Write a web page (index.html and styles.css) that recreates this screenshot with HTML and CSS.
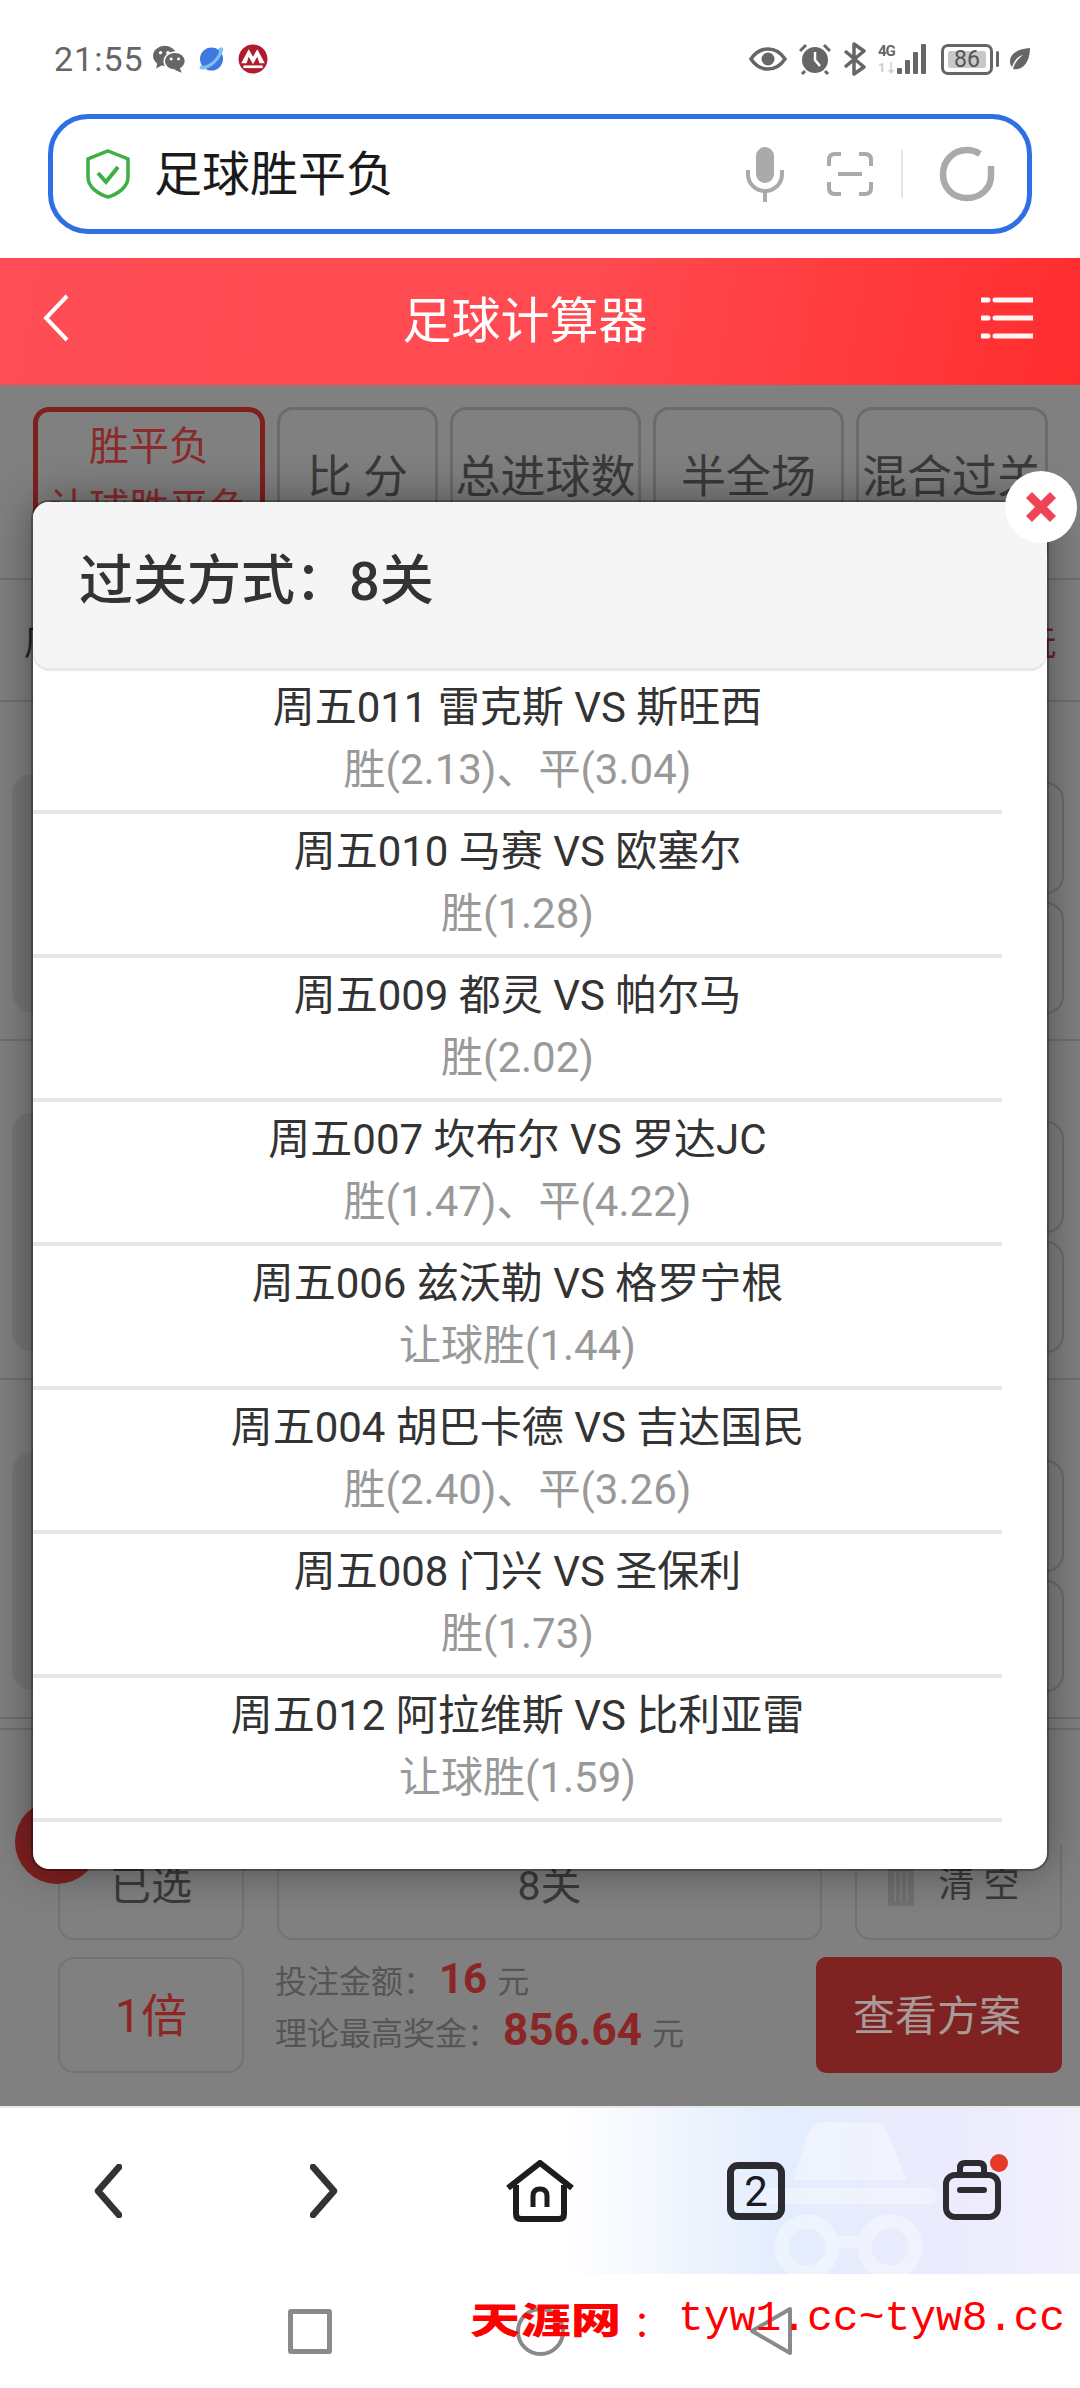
FILE: index.html
```
<!DOCTYPE html>
<html>
<head>
    <meta charset="utf-8">
    <title>足球计算器</title>
    <link rel="stylesheet" href="styles.css">
</head>
<body>
    <div class="phone">
        <!-- Status bar -->
        <div class="status">
            <div class="status-left">
                <span class="time">21:55</span>
                <svg class="ic-wechat" width="34" height="28" viewBox="0 0 32 26">
                    <ellipse cx="12" cy="10" rx="11" ry="9.5" fill="#666"/>
                    <path d="M5 16 L4 22 L11 18 Z" fill="#666"/>
                    <ellipse cx="21.5" cy="15" rx="10" ry="8.5" fill="#666" stroke="#fff" stroke-width="1.5"/>
                    <path d="M26 21 L28 26 L21 23 Z" fill="#666"/>
                    <circle cx="8" cy="7" r="1.6" fill="#fff"/>
                    <circle cx="15" cy="7" r="1.6" fill="#fff"/>
                    <circle cx="18" cy="13" r="1.4" fill="#fff"/>
                    <circle cx="25" cy="13" r="1.4" fill="#fff"/>
                </svg>
                <svg class="ic-planet" width="26" height="26" viewBox="0 0 26 26">
                    <circle cx="12.5" cy="13" r="11.5" fill="#4178e0"/>
                    <path d="M1 23 C6 25 14 20 19 14 C23 9 25 4 24 2 C22 1 20 2 19 3 C22 5 18 11 14 15 C9 19 4 21 2 19 C1 20 0 22 1 23 Z" fill="#7cc2f5"/>
                </svg>
                <svg class="ic-bank" width="30" height="30" viewBox="0 0 28 28">
                    <circle cx="14" cy="14" r="13.5" fill="#b01c2e"/>
                    <path d="M3 18 L10 5 L14 12 L18 5 L25 18 H20 L18 12 L14 19 L10 12 L8 18 Z" fill="#fff"/>
                    <rect x="5" y="20" width="18" height="2.5" fill="#fff"/>
                </svg>
            </div>
            <div class="status-right">
                <svg width="38" height="24" viewBox="0 0 38 24">
                    <path d="M2 12 C8 3 14 2 19 2 C24 2 30 3 36 12 C30 21 24 22 19 22 C14 22 8 21 2 12 Z" fill="none" stroke="#666" stroke-width="3.5"/>
                    <circle cx="19" cy="12" r="6.5" fill="#666"/>
                </svg>
                <svg width="32" height="32" viewBox="0 0 32 32">
                    <circle cx="16" cy="17" r="13" fill="#666"/>
                    <path d="M16 9 V17 L21 23" fill="none" stroke="#fff" stroke-width="2.5"/>
                    <path d="M1 8 L7 2 M31 8 L25 2 M6 28 L3 31 M26 28 L29 31" stroke="#666" stroke-width="3"/>
                </svg>
                <svg width="24" height="34" viewBox="0 0 24 34">
                    <path d="M2 9 L21 25 L11 32 V2 L21 9 L2 25" fill="none" stroke="#666" stroke-width="3.5" stroke-linejoin="round"/>
                </svg>
                <div class="signal">
                    <div class="net">
                        <span class="net-4g">4G</span>
                        <span class="net-arrows">1↓</span>
                    </div>
                    <div class="bars">
                        <i class="bar bar1"></i>
                        <i class="bar bar2"></i>
                        <i class="bar bar3"></i>
                        <i class="bar bar4"></i>
                    </div>
                </div>
                <div class="battery">
                    <div class="battery-body"><span class="battery-level">86</span></div>
                    <i class="battery-nub"></i>
                </div>
                <svg class="ic-leaf" width="23" height="24" viewBox="0 0 23 24">
                    <path d="M22 1 C10 2 2 6 2 15 C2 17 3 19 4 20 C7 12 11 9 15 8 C11 11 7 15 5 22 C14 24 22 16 22 1 Z" fill="#666"/>
                </svg>
            </div>
        </div>

        <!-- Address bar -->
        <div class="addr-wrap">
            <div class="addr">
                <svg width="44" height="50" viewBox="0 0 44 50">
                    <path d="M22 2 L42 10 V28 C42 38 32 45 22 48 C12 45 2 38 2 28 V10 Z" fill="none" stroke="#3cb043" stroke-width="3.5"/>
                    <path d="M12 24 L20 33 L32 18" fill="none" stroke="#3cb043" stroke-width="4"/>
                </svg>
                <span class="addr-text">足球胜平负</span>
                <svg class="ic-mic" width="38" height="56" viewBox="0 0 38 56">
                    <rect x="10" y="1" width="18" height="36" rx="9" fill="#aaa"/>
                    <path d="M2 24 V28 C2 38 10 45 19 45 C28 45 36 38 36 28 V24 M19 45 V56" fill="none" stroke="#aaa" stroke-width="4"/>
                </svg>
                <svg class="ic-scan" width="46" height="44" viewBox="0 0 46 44">
                    <path d="M14 2 H8 Q2 2 2 8 V14 M32 2 H38 Q44 2 44 8 V14 M14 42 H8 Q2 42 2 36 V30 M32 42 H38 Q44 42 44 36 V30" fill="none" stroke="#aaa" stroke-width="4"/>
                    <path d="M11 22 H35" stroke="#aaa" stroke-width="4"/>
                </svg>
                <i class="addr-sep"></i>
                <svg class="ic-reload" width="56" height="56" viewBox="0 0 56 56">
                    <path d="M41 8 C35 4 31 4 28 4 C14 4 4 15 4 28 C4 42 14 52 28 52 C42 52 52 42 52 30 V20" fill="none" stroke="#aaa" stroke-width="6.5"/>
                </svg>
            </div>
        </div>

        <!-- Red title bar -->
        <div class="header">
            <svg width="26" height="48" viewBox="0 0 26 48">
                <path d="M24 2 L3 24 L24 46" fill="none" stroke="#fff" stroke-width="4"/>
            </svg>
            <span class="header-title">足球计算器</span>
            <svg width="52" height="42" viewBox="0 0 52 42">
                <path d="M14 3 H52 M14 21 H52 M14 39 H52" stroke="#fff" stroke-width="5" stroke-linecap="round" opacity=".95"/>
                <path d="M1 3 H7 M1 21 H7 M1 39 H7" stroke="#fff" stroke-width="5" stroke-linecap="round"/>
            </svg>
        </div>

        <!-- Page content, dimmed behind the dialog -->
        <div class="page">
            <div class="tabs">
                <div class="tab tab-active">胜平负<br>让球胜平负</div>
                <div class="tab">比 分</div>
                <div class="tab">总进球数</div>
                <div class="tab">半全场</div>
                <div class="tab">混合过关</div>
            </div>
            <div class="info-row">
                <span>周</span>
                <span class="info-red">玩</span>
            </div>

            <div class="match">
                <div class="match-side"></div>
                <div class="match-odds">
                    <div class="odds-card"></div>
                    <div class="odds-card"></div>
                </div>
            </div>
            <div class="match">
                <div class="match-side"></div>
                <div class="match-odds">
                    <div class="odds-card"></div>
                    <div class="odds-card"></div>
                </div>
            </div>
            <div class="match">
                <div class="match-side"></div>
                <div class="match-odds">
                    <div class="odds-card"></div>
                    <div class="odds-card"></div>
                </div>
            </div>

            <div class="footer">
                <div class="footer-row row-top">
                    <div class="box box-small">已选</div>
                    <div class="box box-wide">8关</div>
                    <div class="box box-clear">
                        <svg width="26" height="38" viewBox="0 0 26 38">
                            <rect width="26" height="38" fill="#707070"/>
                            <path d="M7 4 V34 M13 4 V34 M19 4 V34" stroke="#7c7c7c" stroke-width="2"/>
                        </svg>
                        <span>清 空</span>
                    </div>
                </div>
                <div class="footer-row">
                    <div class="box box-small box-times">1倍</div>
                    <div class="sums">
                        <div class="sum-line">投注金额：<b class="sum-num">16</b> 元</div>
                        <div class="sum-line">理论最高奖金：<b class="sum-num sum-big">856.64</b> 元</div>
                    </div>
                    <div class="view-btn">查看方案</div>
                </div>
            </div>
            <div class="float-ball"></div>
        </div>

        <!-- Browser toolbar -->
        <div class="toolbar">
            <svg class="incognito" width="180" height="160" viewBox="0 0 180 160">
                <path d="M33 60 L48 14 Q52 2 64 2 H114 Q124 2 128 14 L147 60 Z" fill="#fff" fill-opacity=".38"/>
                <rect x="0" y="68" width="177" height="16" rx="8" fill="#fff" fill-opacity=".38"/>
                <circle cx="47" cy="127" r="25.5" fill="none" stroke="#fff" stroke-opacity=".38" stroke-width="14"/>
                <circle cx="130" cy="127" r="25.5" fill="none" stroke="#fff" stroke-opacity=".38" stroke-width="14"/>
                <path d="M79 122 H98" stroke="#fff" stroke-opacity=".38" stroke-width="12"/>
            </svg>
            <div class="tool">
                <svg width="28" height="54" viewBox="0 0 28 54">
                    <path d="M25 3 L4 27 L25 51" fill="none" stroke="#333336" stroke-width="6.5" stroke-linecap="round" stroke-linejoin="round"/>
                </svg>
            </div>
            <div class="tool">
                <svg width="28" height="54" viewBox="0 0 28 54">
                    <path d="M3 3 L24 27 L3 51" fill="none" stroke="#333336" stroke-width="6.5" stroke-linecap="round" stroke-linejoin="round"/>
                </svg>
            </div>
            <div class="tool">
                <svg width="70" height="62" viewBox="0 0 70 62">
                    <path d="M3 28 L35 3 L67 28" fill="none" stroke="#1d1d20" stroke-width="6" stroke-linejoin="miter"/>
                    <path d="M11 25 V54 Q11 59 16 59 H54 Q59 59 59 54 V25" fill="none" stroke="#1d1d20" stroke-width="6"/>
                    <path d="M28 47 V36 Q28 29 35 29 Q42 29 42 36 V47" fill="none" stroke="#1d1d20" stroke-width="5"/>
                </svg>
            </div>
            <div class="tool">
                <div class="tabs-count">2</div>
            </div>
            <div class="tool">
                <svg class="ic-bag" width="66" height="66" viewBox="0 0 66 66">
                    <rect x="7" y="17" width="52" height="42" rx="9" fill="none" stroke="#2b2b30" stroke-width="6"/>
                    <path d="M21 17 V10 Q21 5 26 5 H40 Q45 5 45 10 V17" fill="none" stroke="#2b2b30" stroke-width="6"/>
                    <path d="M21 32 H45" stroke="#2b2b30" stroke-width="6" stroke-linecap="round"/>
                    <circle cx="60" cy="5" r="9" fill="#e53b26"/>
                </svg>
            </div>
        </div>

        <!-- System navigation -->
        <div class="nav">
            <i class="nav-square"></i>
            <i class="nav-circle"></i>
            <svg width="44" height="50" viewBox="0 0 44 50">
                <path d="M41 3 V47 L3 25 Z" fill="none" stroke="#8a8a8a" stroke-width="4" stroke-linejoin="round"/>
            </svg>
        </div>

        <!-- Dialog -->
        <div class="dialog">
            <div class="dialog-head">过关方式：8关</div>
            <ul class="picks">
                <li><p class="pick-name">周五011 雷克斯 VS 斯旺西</p><p class="pick-odds">胜(2.13)、平(3.04)</p></li>
                <li><p class="pick-name">周五010 马赛 VS 欧塞尔</p><p class="pick-odds">胜(1.28)</p></li>
                <li><p class="pick-name">周五009 都灵 VS 帕尔马</p><p class="pick-odds">胜(2.02)</p></li>
                <li><p class="pick-name">周五007 坎布尔 VS 罗达JC</p><p class="pick-odds">胜(1.47)、平(4.22)</p></li>
                <li><p class="pick-name">周五006 兹沃勒 VS 格罗宁根</p><p class="pick-odds">让球胜(1.44)</p></li>
                <li><p class="pick-name">周五004 胡巴卡德 VS 吉达国民</p><p class="pick-odds">胜(2.40)、平(3.26)</p></li>
                <li><p class="pick-name">周五008 门兴 VS 圣保利</p><p class="pick-odds">胜(1.73)</p></li>
                <li><p class="pick-name">周五012 阿拉维斯 VS 比利亚雷</p><p class="pick-odds">让球胜(1.59)</p></li>
            </ul>
        </div>
        <div class="dialog-close">
            <svg width="34" height="32" viewBox="0 0 34 32">
                <path d="M5 4 L29 28 M29 4 L5 28" stroke="#ee4455" stroke-width="8.5"/>
            </svg>
        </div>

        <div class="stamp">
            <span class="stamp-name">天涯网</span>
            <span class="stamp-colon">：</span>
            <span class="stamp-url">tyw1.cc~tyw8.cc</span>
        </div>
    </div>
</body>
</html>
```

FILE: styles.css
```
* {
    box-sizing: border-box;
}

body {
    margin: 0;
    background-color: #fff;
    font-family: Roboto, "Noto Sans CJK SC", sans-serif;
}

.phone {
    position: relative;
    width: 1080px;
    height: 2388px;
    overflow: hidden;
}

/* Status bar */
.status {
    display: flex;
    align-items: center;
    justify-content: space-between;
    height: 114px;
    padding: 4px 49px 0 54px;
}

.status-left,
.status-right {
    display: flex;
    align-items: center;
}

.time {
    font-size: 34px;
    letter-spacing: 1px;
    color: #666;
}

.ic-wechat {
    margin-left: 8px;
}

.ic-planet {
    margin-left: 13px;
}

.ic-bank {
    margin-left: 13px;
}

.status-right {
    gap: 12px;
}

.signal {
    display: flex;
    align-items: flex-end;
    gap: 2px;
    margin-left: -1px;
}

.net {
    display: flex;
    flex-direction: column;
    width: 17px;
    line-height: 1;
}

.net-4g {
    font-size: 15px;
    font-weight: 700;
    letter-spacing: -1px;
    color: #666;
    margin-bottom: 2px;
}

.net-arrows {
    font-size: 13px;
    font-weight: 700;
    letter-spacing: -1px;
    color: #ccc;
}

.bars {
    display: flex;
    align-items: flex-end;
    gap: 3px;
}

.bar {
    width: 5px;
    background: #666;
    border-radius: 1px;
}

.bar1 { height: 6px; }
.bar2 { height: 14px; }
.bar3 { height: 22px; }
.bar4 { height: 30px; }

.battery {
    display: flex;
    align-items: center;
    gap: 3px;
    margin-left: 3px;
}

.battery-body {
    display: flex;
    padding: 4px;
    width: 52px;
    height: 31px;
    border: 3px solid #666;
    border-radius: 7px;
}

.battery-level {
    flex: 1;
    background: #c8c8c8;
    border-radius: 2px;
    font-size: 23px;
    line-height: 17px;
    text-align: center;
    color: #555;
}

.battery-nub {
    width: 3px;
    height: 16px;
    background: #666;
    border-radius: 2px;
}

.ic-leaf {
    margin-left: -3px;
}

/* Address bar */
.addr-wrap {
    padding: 0 48px 24px;
}

.addr {
    display: flex;
    align-items: center;
    height: 120px;
    padding-left: 33px;
    border: 5px solid #2f6fe4;
    border-radius: 40px;
}

.addr-text {
    flex: 1;
    margin: 0 0 8px 24px;
    font-size: 48px;
    color: #1a1a1a;
}

.ic-mic {
    margin-right: -3px;
}

.ic-scan {
    margin-left: 46px;
}

.addr-sep {
    width: 2px;
    height: 48px;
    margin-left: 28px;
    background: #e5e5e5;
}

.ic-reload {
    margin: 0 32px 0 36px;
}

/* Title bar */
.header {
    display: flex;
    align-items: center;
    justify-content: space-between;
    height: 127px;
    padding: 0 47px 8px 43px;
    background: linear-gradient(100deg, #ff4d55 0%, #ff4a50 55%, #ff2d2e 100%);
}

.header-title {
    margin-bottom: 2px;
    font-size: 49px;
    color: #fff;
}

/* Dimmed page */
.page {
    position: relative;
    height: 1721px;
    background-color: #808080;
}

.tabs {
    display: flex;
    gap: 12px;
    height: 195px;
    padding: 22px 32px 0 33px;
    border-bottom: 2px solid #707070;
}

.tab {
    width: 191px;
    height: 160px;
    padding-top: 37px;
    border: 3px solid #6b6b6b;
    border-radius: 16px;
    font-size: 45px;
    line-height: 62px;
    text-align: center;
    color: #3a3a3a;
    overflow: hidden;
}

.tab:nth-child(2) {
    width: 161px;
}

.tab:nth-child(5) {
    width: 192px;
}

.tab-active {
    width: 232px;
    padding-top: 4px;
    border: 5px solid #7f2020;
    font-size: 40px;
    color: #8b2a2a;
}

.info-row {
    display: flex;
    align-items: center;
    justify-content: space-between;
    height: 122px;
    padding: 0 24px 0 24px;
    border-bottom: 2px solid #707070;
    font-size: 34px;
    color: #222;
}

.info-red {
    color: #6e2222;
}

.match {
    display: flex;
    justify-content: space-between;
    height: 339px;
    padding: 72px 16px 0 12px;
    border-bottom: 2px solid #707070;
}

.match-side {
    width: 120px;
    height: 238px;
    border-radius: 20px;
    background: #777;
}

.match-odds {
    display: flex;
    flex-direction: column;
    gap: 8px;
    padding-top: 8px;
}

.odds-card {
    width: 300px;
    height: 112px;
    border: 2px solid #6c6c6c;
    border-radius: 18px;
}

.footer {
    height: 387px;
    padding: 126px 18px 0 58px;
    border-top: 0;
}

.footer::before {
    content: "";
    display: block;
    height: 2px;
    margin: -117px -18px 115px -58px;
    background: #707070;
}

.footer-row {
    display: flex;
    height: 116px;
}

.row-top {
    height: 95px;
    margin-bottom: 17px;
    gap: 33px;
}

.box {
    display: flex;
    align-items: center;
    justify-content: center;
    border: 2px solid #737373;
    border-radius: 16px;
    color: #3a3a3a;
    font-size: 41px;
}

.row-top .box {
    padding-bottom: 20px;
    border-radius: 0 0 16px 16px;
    border-top: 0;
}

.box-small {
    width: 186px;
}

.box-wide {
    flex: 1;
}

.row-top .box-clear {
    width: 207px;
    gap: 25px;
    padding: 0 10px 22px 0;
    font-size: 36px;
}

.box-clear svg {
    margin-top: 12px;
}

.box-times {
    padding-bottom: 6px;
    font-size: 46px;
    color: #8f2424;
}

.sums {
    flex: 1;
    margin-top: -2px;
    padding-left: 31px;
}

.sum-line {
    height: 51px;
    font-size: 32px;
    line-height: 48px;
    color: #555;
    white-space: nowrap;
}

.sum-num {
    margin: 0 2px 0 4px;
    font-size: 42px;
    color: #8b2626;
}

.sum-big {
    font-size: 44px;
}

.view-btn {
    display: flex;
    align-items: center;
    justify-content: center;
    width: 246px;
    padding: 0 4px 6px 0;
    border-radius: 10px;
    background: #7f2222;
    font-size: 42px;
    color: #a89a98;
}

.float-ball {
    position: absolute;
    left: 15px;
    top: 1415px;
    width: 84px;
    height: 84px;
    border-radius: 50%;
    background: #7f2020;
}

/* Browser toolbar */
.toolbar {
    position: relative;
    display: grid;
    grid-template-columns: repeat(5, 216px);
    height: 168px;
    border-top: 2px solid #e8e8e8;
    background: linear-gradient(90deg, #fff 52%, #e3edfd 72%, #ebebfd 88%, #f2f0fd 100%);
    overflow: hidden;
}

.incognito {
    position: absolute;
    left: 760px;
    top: 12px;
}

.tool {
    position: relative;
    display: flex;
    align-items: center;
    justify-content: center;
}

.ic-bag {
    overflow: visible;
}

.tabs-count {
    display: flex;
    align-items: center;
    justify-content: center;
    width: 58px;
    height: 58px;
    border: 7px solid #2b2b30;
    border-radius: 11px;
    font-size: 42px;
    color: #1a1a1f;
}

/* System navigation */
.nav {
    display: flex;
    align-items: center;
    justify-content: center;
    gap: 184px;
    height: 114px;
}

.nav-square {
    width: 44px;
    height: 45px;
    border: 5px solid #8a8a8a;
    border-radius: 3px;
}

.nav-circle {
    width: 49px;
    height: 49px;
    border: 4px solid #8a8a8a;
    border-radius: 50%;
}

/* Dialog */
.dialog {
    position: absolute;
    left: 33px;
    top: 502px;
    width: 1014px;
    height: 1367px;
    background: #fff;
    border-radius: 16px;
    box-shadow: 0 0 0 2px rgba(0, 0, 0, .28), 0 0 46px rgba(0, 0, 0, .42);
}

.dialog-head {
    height: 166px;
    padding: 44px 0 0 46px;
    border-radius: 16px;
    background: #f5f5f5;
    box-shadow: 0 3px 0 #e8e8e8;
    font-size: 54px;
    font-weight: 500;
    line-height: 72px;
    color: #333;
}

.picks {
    width: 969px;
    margin: 2px 0 0;
    padding: 0;
    list-style: none;
}

.picks li {
    height: 144px;
    padding-top: 7px;
    border-bottom: 4px solid #e6e6e6;
    text-align: center;
}

.picks p {
    margin: 0;
    font-size: 42px;
    line-height: 62px;
}

.pick-name {
    color: #333;
}

.pick-odds {
    color: #999;
}

.dialog-close {
    position: absolute;
    left: 1005px;
    top: 471px;
    display: flex;
    align-items: center;
    justify-content: center;
    width: 72px;
    height: 72px;
    border-radius: 50%;
    background: #fff;
}

/* Overprinted site name */
.stamp {
    position: absolute;
    left: 470px;
    top: 2289px;
    display: flex;
    align-items: center;
    color: #f00;
}

.stamp-name {
    width: 153px;
    font-size: 36px;
    font-weight: 900;
    transform: scaleX(1.4);
    transform-origin: left center;
    font-family: "Noto Sans CJK SC", sans-serif;
}

.stamp-colon {
    width: 45px;
    margin-left: 10px;
    font-size: 36px;
    font-family: "Noto Sans CJK SC", sans-serif;
    padding-top: 6px;
}

.stamp-url {
    font-size: 43px;
    font-family: "Liberation Mono", monospace;
}
```
